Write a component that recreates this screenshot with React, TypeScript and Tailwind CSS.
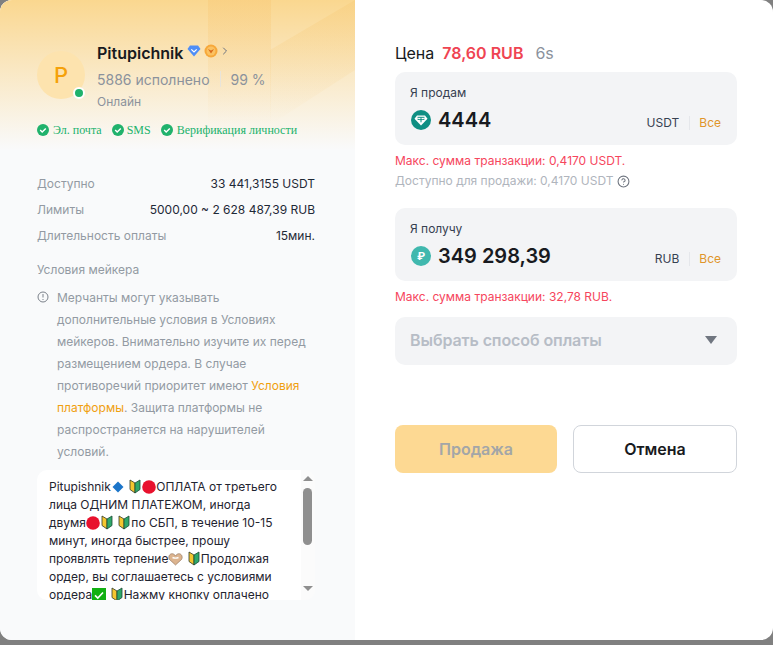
import { ChevronRight, CircleHelp } from 'lucide-react';

const font = { fontFamily: 'Inter, "Noto Sans", sans-serif' };

function CheckBadge() {
  return (
    <svg width="12" height="12" viewBox="0 0 12 12" className="shrink-0">
      <circle cx="6" cy="6" r="6" fill="#20b26c" />
      <path d="M3.2 6.1l2 2 3.6-3.7" fill="none" stroke="#fff" strokeWidth="1.4" />
    </svg>
  );
}

function Beginner() {
  return (
    <svg width="12" height="15" viewBox="0 0 12 15" className="inline-block align-[-3px] mx-[1px]">
      <path d="M1 1L6 4v10L1 10.500z" fill="#f5c62f" stroke="#2f3a2a" strokeWidth=".8" />
      <path d="M11 1L6 4v10l5-3.500z" fill="#2fa86a" stroke="#1c4a34" strokeWidth=".8" />
    </svg>
  );
}

function RedDot() {
  return (
    <svg width="14" height="14" viewBox="0 0 14 14" className="inline-block align-[-3px]">
      <circle cx="7" cy="7" r="6.800" fill="#e8112d" />
    </svg>
  );
}

function BlueDiamond() {
  return (
    <svg width="12" height="12" viewBox="0 0 12 12" className="inline-block align-[-2px] mx-[1px]">
      <path d="M6 .5l5.500 5.500-5.500 5.500-5.500-5.500z" fill="#1b75c9" />
    </svg>
  );
}

function Hands() {
  return (
    <svg width="15" height="14" viewBox="0 0 15 14" className="inline-block align-[-3px]">
      <path d="M7.500 13L1.500 7.500C-.2 5 1.500 1.500 4.300 1.700 5.800 1.800 6.800 2.800 7.500 4 8.200 2.800 9.200 1.800 10.700 1.700 13.500 1.500 15.200 5 13.500 7.500z" fill="#dcb48f" stroke="#8a6a50" strokeWidth=".6" />
      <path d="M4.500 5.500c2 .8 4 .8 6 0" fill="none" stroke="#fff" strokeWidth="1.400" />
    </svg>
  );
}

function GreenCheck() {
  return (
    <svg width="14" height="14" viewBox="0 0 14 14" className="inline-block align-[-3px]">
      <rect width="14" height="14" fill="#12b012" />
      <path d="M3 7.300l2.800 2.700L11 4.500" fill="none" stroke="#fff" strokeWidth="1.600" />
    </svg>
  );
}

function TetherIcon() {
  return (
    <svg width="20" height="20" viewBox="0 0 20 20" className="shrink-0">
      <circle cx="10" cy="10" r="10" fill="#0f8f83" />
      <path d="M6 5.500h8l2.500 3.300L10 15.500 3.500 8.800z" fill="#fff" />
      <path d="M6.500 7.300h7M10 7.300v5M6.500 9.200c2.200.6 4.800.6 7 0" fill="none" stroke="#0f8f83" strokeWidth="1" />
    </svg>
  );
}

function RubleIcon() {
  return (
    <div className="w-5 h-5 shrink-0 rounded-full bg-[#40b8ae] flex items-center justify-center text-white text-[11px] font-bold">
      ₽
    </div>
  );
}

function InfoRow({ label, value }: { label: string; value: string }) {
  return (
    <div className="flex items-center justify-between h-[26px]">
      <span className="text-[#939aa3]">{label}</span>
      <span className="text-[#1f2937]">{value}</span>
    </div>
  );
}

function AmountBox({ label, value, unit, icon }: { label: string; value: string; unit: string; icon: React.ReactNode }) {
  return (
    <div className="h-[73px] bg-[#f3f4f6] rounded-[10px] pl-[15px] pr-[16px] pt-[13px]">
      <div className="text-[12px] leading-4 text-[#374151]">{label}</div>
      <div className="flex items-center mt-[8px] h-[22px] pl-px">
        {icon}
        <span className="ml-[7px] text-[20px] font-semibold text-[#181a20]">{value}</span>
        <div className="ml-auto flex items-center text-[12px] mt-[6px]">
          <span className="text-[#374151]">{unit}</span>
          <span className="ml-[10px] mr-[9px] w-px h-[14px] bg-[#e5e7eb]" />
          <span className="text-[#e0952a]">Все</span>
        </div>
      </div>
    </div>
  );
}

export default function App() {
  return (
    <div className="h-[645px] w-[773px] overflow-hidden bg-[#808080]" style={font}>
      <div className="h-[640px] rounded-[12px] bg-white overflow-hidden flex">
        {/* Left panel */}
        <div className="relative w-[355px] shrink-0 bg-[#f9fafb] px-[37px] pt-[42px] text-[12px]">
          <div className="absolute inset-x-0 top-0 h-[150px] bg-gradient-to-b from-[#fad78f] to-[#f9fafb]" />
          <div className="absolute left-[208px] top-0 w-[63px] h-[125px] bg-gradient-to-b from-[#f8c672]/35 to-transparent" />
          <svg className="absolute left-0 top-0" width="355" height="125" viewBox="0 0 355 125">
            <defs>
              <linearGradient id="band" x1="0" y1="0" x2="0" y2="1">
                <stop offset="0" stopColor="#f6c66f" stopOpacity=".3" />
                <stop offset="1" stopColor="#f6c66f" stopOpacity="0" />
              </linearGradient>
            </defs>
            <path d="M270 50L355 0v70l-85 55z" fill="url(#band)" />
          </svg>

          <div className="relative">
            {/* Merchant header */}
            <div className="flex">
              <div className="relative mt-[9px] w-12 h-12 shrink-0 rounded-full bg-[#fde3ae] flex items-center justify-center text-[#f5a10a] text-[22px] font-medium">
                P
                <span className="absolute right-0 bottom-0 w-3 h-3 rounded-full bg-[#20b26c] border-2 border-white" />
              </div>
              <div className="ml-3">
                <div className="flex items-center h-5 mt-px">
                  <span className="text-[16px] font-semibold text-[#181a20]">Pitupichnik</span>
                  <svg width="14" height="12" viewBox="0 0 14 12" className="ml-[4px] -mt-1">
                    <path d="M3 .5h8L13.500 4 7 11.500.5 4z" fill="#4f8ef7" />
                    <path d="M4.300 4.300L7 7l2.700-2.700" fill="none" stroke="#fff" strokeWidth="1.200" />
                  </svg>
                  <svg width="14" height="14" viewBox="0 0 14 14" className="ml-[3px] -mt-1">
                    <circle cx="7" cy="7" r="6.500" fill="#f7a83a" />
                    <circle cx="7" cy="7" r="4.500" fill="#fbc262" />
                    <path d="M4 5l3 4.500L10 5 7 6.500z" fill="#d9691a" />
                  </svg>
                  <ChevronRight className="w-3 h-3 ml-[1px] -mt-1 text-[#6b7280]" />
                </div>
                <div className="flex items-center mt-[6px] h-5 text-[14px] text-[#8b929c]">
                  <span>5886 исполнено</span>
                  <span className="mx-[10px] w-px h-4 bg-[#e8e4da]" />
                  <span>99 %</span>
                </div>
                <div className="mt-[5px] leading-4 text-[#8b929c]">Онлайн</div>
              </div>
            </div>

            {/* Verification */}
            <div className="mt-[12px] flex items-center gap-[10px] h-4 text-[#20b26c]" style={{ fontFamily: '"Liberation Serif", serif' }}>
              <span className="flex items-center gap-[4px]"><CheckBadge />Эл. почта</span>
              <span className="flex items-center gap-[3px]"><CheckBadge />SMS</span>
              <span className="flex items-center gap-[4px]"><CheckBadge />Верификация личности</span>
            </div>

            {/* Offer info */}
            <div className="mt-[33px] w-[278px]">
              <InfoRow label="Доступно" value="33 441,3155 USDT" />
              <InfoRow label="Лимиты" value="5000,00 ~ 2 628 487,39 RUB" />
              <InfoRow label="Длительность оплаты" value="15мин." />
            </div>

            <div className="mt-[13px] leading-4 text-[#939aa3]">Условия мейкера</div>

            <div className="mt-[9px] flex text-[#939aa3] leading-[22px]">
              <svg width="12" height="12" viewBox="0 0 12 12" className="mt-[4px] shrink-0">
                <circle cx="6" cy="6" r="5" fill="none" stroke="#7b818a" strokeWidth="1" />
                <path d="M6 3v3.500M6 8v1" stroke="#7b818a" strokeWidth="1" />
              </svg>
              <p className="ml-2 w-[252px]">
                Мерчанты могут указывать дополнительные условия в Условиях мейкеров. Внимательно изучите их перед размещением ордера. В случае противоречий приоритет имеют{' '}
                <span className="text-[#f0a010]">Условия платформы</span>. Защита платформы не распространяется на нарушителей условий.
              </p>
            </div>

            {/* Maker terms */}
            <div className="relative mt-[7px] w-[278px] h-[130px] flex overflow-hidden rounded-[10px]">
              <div className="w-[264px] bg-white pl-3 pr-[19px] pt-[8px] text-[12px] leading-[18px] text-[#1f2430]">
                Pitupishnik<BlueDiamond /> <Beginner /><RedDot />ОПЛАТА от третьего лица ОДНИМ ПЛАТЕЖОМ, иногда двумя<RedDot /><Beginner /> <Beginner />по СБП, в течение 10-15 минут, иногда быстрее, прошу проявлять терпение<Hands /> <Beginner />Продолжая ордер, вы соглашаетесь с условиями ордера<GreenCheck /> <Beginner />Нажму кнопку оплачено
              </div>
              <div className="w-[14px] bg-[#fbfbfb] relative">
                <span className="absolute left-[2px] top-[6px] border-x-[5px] border-x-transparent border-b-[5px] border-b-[#8f8f8f]" />
                <span className="absolute left-[2px] top-[18px] w-[9px] h-[57px] rounded-full bg-[#8f8f8f]" />
                <span className="absolute left-[2px] bottom-[9px] border-x-[5px] border-x-transparent border-t-[5px] border-t-[#8f8f8f]" />
              </div>
            </div>
          </div>
        </div>

        {/* Right panel */}
        <div className="flex-1 pl-[40px] pr-[36px] pt-[42px]">
          <div className="flex items-center h-[22px] text-[16px] text-[#181a20]">
            Цена
            <span className="ml-2 font-semibold text-[#ef4452]">78,60 RUB</span>
            <span className="ml-3 text-[#8b929c]">6s</span>
          </div>

          <div className="mt-2">
            <AmountBox label="Я продам" value="4444" unit="USDT" icon={<TetherIcon />} />
          </div>
          <div className="mt-[8px] text-[12px] leading-4 text-[#f6465d]">Макс. сумма транзакции: 0,4170 USDT.</div>
          <div className="mt-[4px] flex items-center gap-1 text-[12px] leading-4 text-[#b0b5bd]">
            Доступно для продажи: 0,4170 USDT
            <CircleHelp className="w-[13px] h-[13px] text-[#707680]" />
          </div>

          <div className="mt-[19px]">
            <AmountBox label="Я получу" value="349 298,39" unit="RUB" icon={<RubleIcon />} />
          </div>
          <div className="mt-[8px] text-[12px] leading-4 text-[#f6465d]">Макс. сумма транзакции: 32,78 RUB.</div>

          <div className="mt-[12px] h-[48px] rounded-[10px] bg-[#f3f4f6] pl-[15px] pr-[20px] pb-[3px] flex items-center justify-between">
            <span className="text-[16px] font-semibold tracking-[-0.1px] text-[#b7bdc6]">Выбрать способ оплаты</span>
            <span className="border-x-[6px] border-x-transparent border-t-[8px] border-t-[#707680]" />
          </div>

          <div className="mt-[60px] flex gap-4">
            <button className="w-[162px] h-12 rounded-[8px] bg-[#fdd993] text-[16px] font-semibold text-[#a3a6a8]">Продажа</button>
            <button className="w-[164px] h-12 rounded-[8px] bg-white border border-[#d1d5db] text-[16px] font-semibold text-[#181a20]">Отмена</button>
          </div>
        </div>
      </div>
    </div>
  );
}
